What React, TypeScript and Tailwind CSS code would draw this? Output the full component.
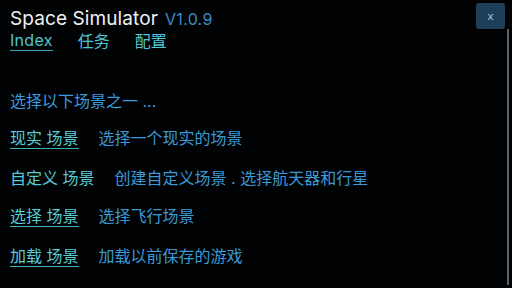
import React from "react";

const rows = [
  { label: "现实 场景", desc: "选择一个现实的场景", underline: true, mt: "mt-[21px]" },
  { label: "自定义 场景", desc: "创建自定义场景 . 选择航天器和行星", underline: false, mt: "mt-[21px]" },
  { label: "选择 场景", desc: "选择飞行场景", underline: true, mt: "mt-[19px]" },
  { label: "加载 场景", desc: "加载以前保存的游戏", underline: true, mt: "mt-[21px]" },
];

export default function App() {
  return (
    <div className="relative w-[512px] h-[288px] overflow-hidden bg-[#010203] font-['Inter','Noto_Sans_CJK_SC',sans-serif]">
      {/* header */}
      <div className="pl-[10px] pt-[9px]">
        <div className="flex items-baseline gap-[7px] leading-none">
          <span className="text-[19px] text-[#eef2f4] tracking-[0.1px]">Space Simulator</span>
          <span className="text-[16px] text-[#3b8fcb] tracking-[0.3px]">V1.0.9</span>
        </div>
        <div className="flex items-end mt-[4px] text-[16px] leading-none text-[#4fc6d6]">
          <span className="border-b border-[#3aa7b6] pb-[2px] tracking-[0.3px]">Index</span>
          <span className="pb-[2px] ml-[25px]">任务</span>
          <span className="pb-[2px] ml-[25px]">配置</span>
        </div>
      </div>

      {/* menu */}
      <div className="pl-[10px] mt-[42px] text-[16px] leading-none">
        <div className="text-[#3c9bdc]">选择以下场景之一 ...</div>
        {rows.map((r) => (
          <div key={r.label} className={`flex items-start gap-[20px] ${r.mt}`}>
            <span
              className={
                r.underline
                  ? "text-[#58ccd6] border-b border-[#3fb0b8] pb-[2px]"
                  : "text-[#58ccd6] pb-[3px]"
              }
            >
              {r.label}
            </span>
            <span className="text-[#3a9ad8]">{r.desc}</span>
          </div>
        ))}
      </div>

      {/* close button */}
      <button className="absolute top-[3px] right-[7px] w-[29px] h-[26px] rounded-[3px] bg-[#1d3f57] text-[#9cc0d6] text-[11px] leading-none flex items-center justify-center font-['DejaVu_Sans',sans-serif]">
        x
      </button>
      {/* scrollbar */}
      <div className="absolute top-[29px] bottom-[3px] right-[3px] w-[2px] bg-[#55656c]" />
    </div>
  );
}
